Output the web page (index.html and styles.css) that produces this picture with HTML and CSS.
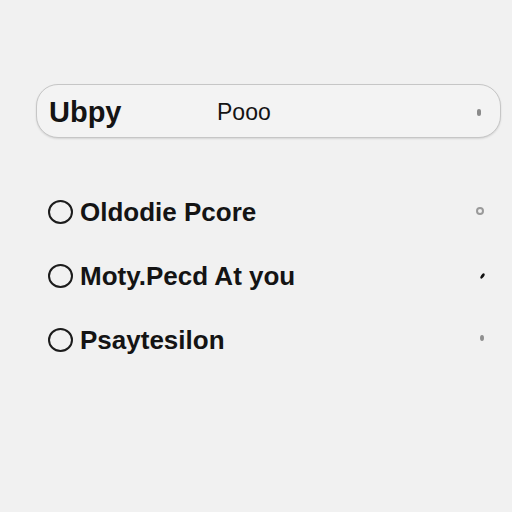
FILE: index.html
```html
<!DOCTYPE html>
<html>
<head>
<meta charset="utf-8">
<link rel="stylesheet" href="styles.css">
</head>
<body>
<div class="page">
  <div class="search">
    <span class="brand">Ubpy</span>
    <span class="query">Pooo</span>
    <span class="grip"></span>
  </div>
  <ul class="list">
    <li class="row">
      <span class="radio"></span>
      <span class="label">Oldodie Pcore</span>
      <span class="mark mark-ring"></span>
    </li>
    <li class="row">
      <span class="radio"></span>
      <span class="label">Moty.Pecd At you</span>
      <span class="mark mark-dot"></span>
    </li>
    <li class="row">
      <span class="radio"></span>
      <span class="label">Psaytesilon</span>
      <span class="mark mark-blob"></span>
    </li>
  </ul>
</div>
</body>
</html>
```
FILE: styles.css
```css
html, body {
  margin: 0;
  padding: 0;
  background: #f1f1f1;
}
body {
  font-family: "Liberation Sans", Arial, sans-serif;
  color: #141414;
  width: 512px;
  height: 512px;
  overflow: hidden;
}
.page {
  padding: 84px 11px 0 36px;
}
.search {
  box-sizing: border-box;
  width: 465px;
  height: 54px;
  border: 1.5px solid #c6c6c6;
  border-radius: 22px;
  background: #f3f3f3;
  box-shadow: 0 1px 2px rgba(0,0,0,0.12);
  display: flex;
  align-items: center;
  padding: 0 0 0 12px;
}
.brand {
  font-size: 29px;
  font-weight: bold;
  width: 168px;
  line-height: 1;
  margin-top: 2px;
}
.query {
  font-size: 23px;
  line-height: 1;
  width: 260px;
  margin-top: 3px;
}
.grip {
  width: 4px;
  height: 7px;
  border-radius: 2px;
  background: #8a8a8a;
  margin-top: 2px;
}
.list {
  list-style: none;
  margin: 42px 0 0 0;
  padding: 0;
}
.row {
  display: flex;
  align-items: center;
  height: 64px;
  padding-left: 12px;
}
.radio {
  box-sizing: border-box;
  width: 25px;
  height: 24px;
  border: 2px solid #1c1c1c;
  border-radius: 50%;
  flex: none;
}
.label {
  font-size: 26px;
  font-weight: bold;
  margin-left: 7px;
  flex: 1;
}
.mark {
  flex: none;
  margin-right: 17px;
}
.mark-ring {
  box-sizing: border-box;
  width: 8px;
  height: 8px;
  border: 2px solid #9a9a9a;
  border-radius: 50%;
  margin-top: -3px;
}
.mark-dot {
  width: 3px;
  height: 6px;
  background: #111;
  border-radius: 50%;
  transform: rotate(35deg);
}
.mark-blob {
  width: 4px;
  height: 6px;
  background: #909090;
  border-radius: 50%;
  margin-top: -4px;
}
```
